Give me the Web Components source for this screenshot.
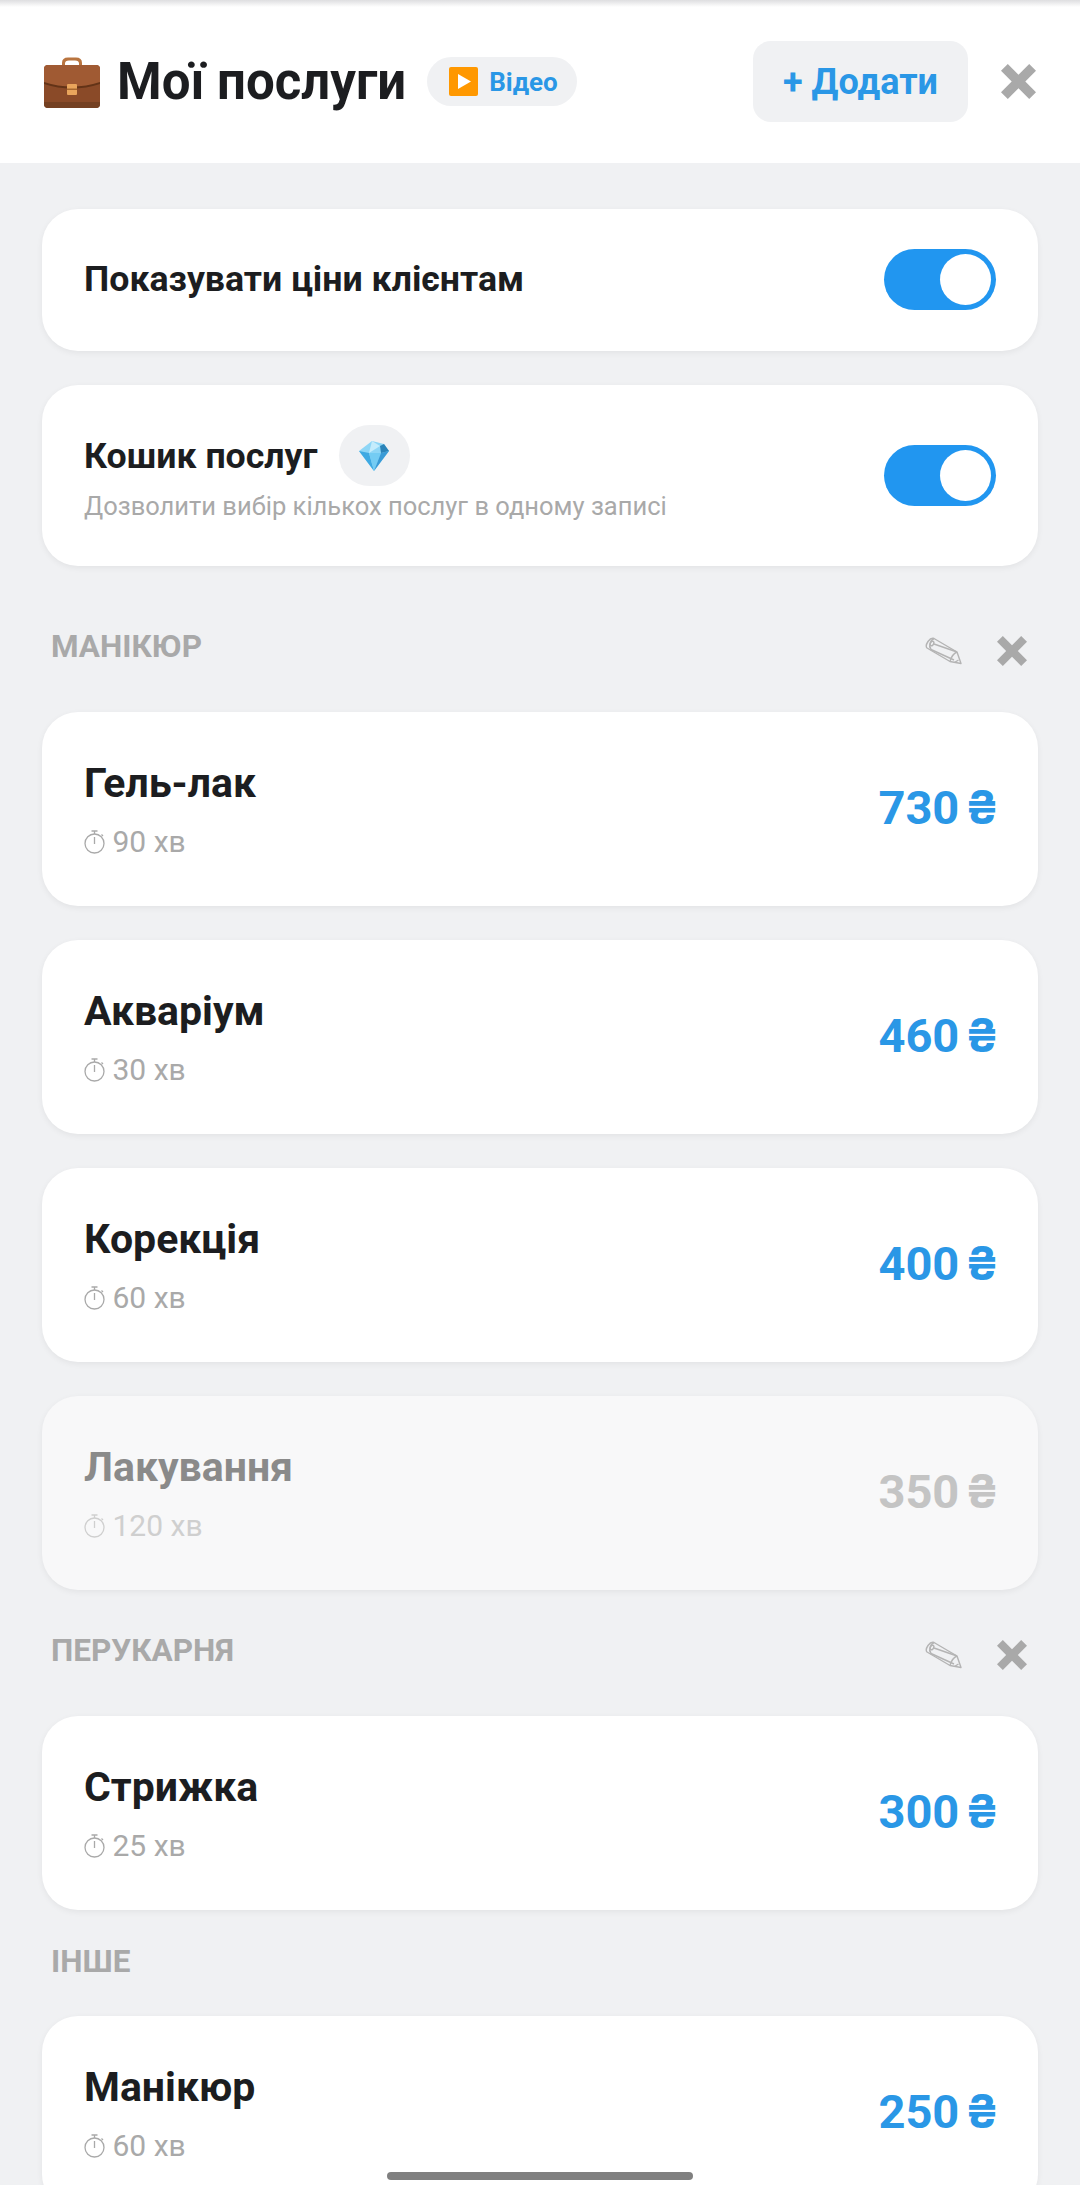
<!DOCTYPE html>
<html lang="uk"><head><meta charset="utf-8"><title>Мої послуги</title>
<style>
html,body{margin:0;padding:0;height:2185px;overflow:hidden;background:#f0f1f3;font-family:Roboto,"Noto Sans",sans-serif;color:#1c1d20}
</style></head><body>
<x-app>
  <x-header></x-header>
  <x-main>
    <x-card>
      <div slot="title">Показувати ціни клієнтам</div>
    </x-card>
    <x-card sub="Дозволити вибір кількох послуг в одному записі" gem>
      <div slot="title">Кошик послуг</div>
    </x-card>
    <x-section name="Манікюр" tools top="32" below="50">
      <x-service name="Гель-лак" mins="90" price="730"></x-service>
      <x-service name="Акваріум" mins="30" price="460"></x-service>
      <x-service name="Корекція" mins="60" price="400"></x-service>
      <x-service name="Лакування" mins="120" price="350" off></x-service>
    </x-section>
    <x-section name="Перукарня" tools top="12" below="50">
      <x-service name="Стрижка" mins="25" price="300"></x-service>
    </x-section>
    <x-section name="Інше" top="3" below="39">
      <x-service name="Манікюр" mins="60" price="250"></x-service>
    </x-section>
  </x-main>
  <x-homebar></x-homebar>
</x-app>
<script>
const X_ICON = s => `<svg width="${s}" height="${s}" viewBox="0 0 36 36" aria-hidden="true"><path d="M7 0 18 11 29 0 36 7 25 18 36 29 29 36 18 25 7 36 0 29 11 18 0 7z" fill="#a9a9a9"/></svg>`;
function el(name, html){
  customElements.define(name, class extends HTMLElement{
    connectedCallback(){
      if(this.shadowRoot) return;
      const r=this.attachShadow({mode:'open'});
      r.innerHTML = typeof html==='function'?html(this):html;
    }
  });
}
el('x-app',`<style>:host{display:block;height:2185px;overflow:hidden;position:relative;background:#f0f1f3}</style><slot></slot>`);
el('x-header',`<style>
:host{display:flex;align-items:center;height:163px;padding:0 42px;background:linear-gradient(#dedee0,#fff 7px) #fff}
h1{margin:0 0 0 17px;font:700 51px/1 Roboto,sans-serif;color:#1c1d20}
.bag{display:block;width:56px;height:51px;margin:2px 0 0 2px;flex:none}
.pill{display:flex;align-items:center;gap:11px;height:49px;margin-left:21px;padding:0 19px 0 22px;border-radius:25px;background:#f0f1f3;color:#2a97e6;font:700 26px/1 Roboto,sans-serif}
.add{margin-left:auto;display:flex;align-items:center;justify-content:center;width:215px;height:81px;border-radius:18px;background:#f0f1f3;color:#2a97e6;font:700 36px/1 Roboto,sans-serif}
.close{display:flex;margin-left:33px;margin-right:2px}
</style>
<svg class="bag" viewBox="0 0 56 51" aria-hidden="true">
  <path d="M18 10V6Q18 0.500 24 0.500h8Q38 .5 38 6v4h-3V6.500Q35 3.500 31 3.500h-6Q21 3.500 21 6.500V10z" fill="#b9743f"/>
  <rect x="0" y="8" width="56" height="43" rx="4" fill="#8a4a28"/>
  <path d="M0 12q0-4 4-4h48q4 0 4 4v14q-28 8-56 0z" fill="#a05a33"/>
  <path d="M0 25q28 9 56 0v2q-28 9-56 0z" fill="#633317"/>
  <path d="M0 45h56v2q0 4-4 4H4q-4 0-4-4z" fill="#744022"/>
  <rect x="23" y="27" width="10" height="11" rx="1" fill="#e9a55c"/><rect x="23" y="31.500" width="10" height="1.500" fill="#a8682e"/>
</svg>
<h1>Мої послуги</h1>
<div class="pill"><svg width="29" height="29" viewBox="0 0 29 29" aria-hidden="true"><rect width="29" height="29" rx="2" fill="#ff9800"/><path d="M9 7l13 7.500L9 22z" fill="#fff"/></svg><span>Відео</span></div>
<div class="add">+ Додати</div>
<div class="close">${X_ICON(35)}</div>`);
el('x-main',`<style>:host{display:flex;flex-direction:column;padding:46px 42px 0;gap:34px}</style><slot></slot>`);
el('x-toggle',`<style>:host{display:block;flex:none;width:112px;height:61px;border-radius:31px;background:#2196f0;position:relative}
i{position:absolute;top:5px;right:5px;width:51px;height:51px;border-radius:50%;background:#fff}</style><i></i>`);
el('x-card', h=>`<style>
:host{display:flex;align-items:center;justify-content:space-between;padding:40px 42px 41px;min-height:61px;border-radius:36px;background:#fff;box-shadow:0 2px 6px rgba(0,0,0,.06)}
:host([gem]){padding-bottom:44px}
:host([gem]) x-toggle{margin-top:4px}
:host(:not([gem])) .t{margin-top:-2px}
.t{display:flex;align-items:center;font:700 35.700px/44px Roboto,sans-serif;color:#1c1d20}
.gem{display:flex;align-items:center;justify-content:center;width:71px;height:61px;border-radius:31px;background:#f0f1f3;margin-left:21px}
.s{font:400 25.500px/32px Roboto,sans-serif;color:#a9a9a9;margin-top:4px}
</style><div><div class="t"><slot name="title"></slot>${h.hasAttribute('gem')?`<span class="gem"><svg width="30" height="30" viewBox="0 0 30 30" aria-hidden="true"><path d="M13 0 25 3 30 10 15 30 0 10z" fill="#8ed6f6"/><path d="M0 10 10 12 15 30z" fill="#3fa9e2"/><path d="M10 12 22 12 15 30z" fill="#74ccf3"/><path d="M22 12 30 10 15 30z" fill="#3a9bd6"/><path d="M25 3 30 10 22 12 21 5z" fill="#2b83b8"/><path d="M13 0 21 5 10 12z" fill="#c4ecfc"/></svg></span>`:''}</div>${h.getAttribute('sub')?`<div class="s">${h.getAttribute('sub')}</div>`:''}</div><x-toggle></x-toggle>`);
el('x-section', h=>`<style>
:host{display:flex;flex-direction:column;gap:34px;margin-top:${h.getAttribute('top')}px}
.h{display:flex;align-items:center;justify-content:space-between;height:30px;padding:0 11px 0 9px;margin-bottom:${+h.getAttribute('below')-34}px}
.l{font:700 31.500px/30px Roboto,sans-serif;color:#a9a9a9;text-transform:uppercase}
.tools{display:flex;align-items:center;gap:35px;margin-top:7px}
</style><div class="h"><span class="l">${h.getAttribute('name')}</span>${h.hasAttribute('tools')?`<span class="tools"><svg width="37" height="28" viewBox="0 0 37 28" aria-hidden="true" fill="none" stroke="#b4b4b4" stroke-width="1.400" stroke-linejoin="round"><path d="M9 1.500 32 15l4 11.500-11-2L2 11Q0 9 3 4.500 6 0.500 9 1.500z"/><path d="M9 1.500Q6 3 5 6.500 4 9.500 6 12.500L29 23M9 7l23 8"/><path d="M32 15Q27 17 25 24.500M33.500 23l-4 2.500"/><ellipse cx="7" cy="6.500" rx="1.600" ry="2.400" transform="rotate(30 7 6.500)"/></svg>${X_ICON(30)}</span>`:''}</div><slot></slot>`);
el('x-service', h=>{const off=h.hasAttribute('off');return `<style>
:host{display:flex;align-items:center;justify-content:space-between;height:194px;padding:0 42px;border-radius:36px;background:${off?'#f8f8f9':'#fff'};box-shadow:0 2px 6px rgba(0,0,0,.06)}
.n{font:700 41px/46px Roboto,sans-serif;color:${off?'#8a8a8a':'#1c1d20'};margin-top:2px}
.m{display:flex;align-items:center;gap:7.500px;font:400 30px/36px Roboto,sans-serif;color:${off?'#cfcfcf':'#a9a9a9'};margin-top:18px}
.p{flex:none;white-space:nowrap;font:700 47px/1 Roboto,sans-serif;color:${off?'#c4c4c4':'#2a97e6'};margin-bottom:4px;word-spacing:-6px}
.p span{font-family:Inter,sans-serif;font-size:46px;margin-right:-3px}
</style><div><div class="n">${h.getAttribute('name')}</div><div class="m"><svg width="21" height="24" viewBox="0 0 21 24" aria-hidden="true" fill="none" stroke="currentColor" stroke-width="1.300"><circle cx="10.500" cy="13.500" r="9.500"/><path d="M7.500 1h6M10.500 1v3M10.500 7v7M17.500 4.500l1.500 1.500"/></svg><span>${h.getAttribute('mins')} хв</span></div></div><div class="p">${h.getAttribute('price')} <span>₴</span></div>`});
el('x-homebar',`<style>:host{position:absolute;left:387px;top:2172px;width:306px;height:8px;border-radius:4px;background:#808080}</style>`);
</script>
</body></html>
